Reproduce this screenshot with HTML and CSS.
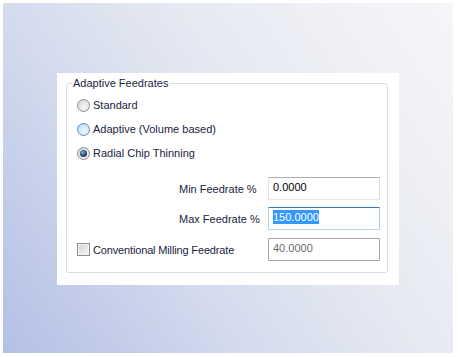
FILE: index.html
```html
<!doctype html>
<html lang="en">
    <head>
        <meta charset="UTF-8" />
        <meta name="viewport" content="width=device-width, initial-scale=1.0" />
        <title>Adaptive Feedrates</title>
        <link rel="stylesheet" href="styles.css">
    </head>
    <body>
        <div class="screen">
            <div class="panel">
                <fieldset class="group">
                    <legend>Adaptive Feedrates</legend>

                    <div class="option">
                        <span class="radio"></span>
                        <span>Standard</span>
                    </div>
                    <div class="option">
                        <span class="radio hover"></span>
                        <span>Adaptive (Volume based)</span>
                    </div>
                    <div class="option">
                        <span class="radio checked"></span>
                        <span>Radial Chip Thinning</span>
                    </div>

                    <div class="field-row first">
                        <span class="field-label">Min Feedrate %</span>
                        <div class="textbox">0.0000</div>
                    </div>
                    <div class="field-row">
                        <span class="field-label">Max Feedrate %</span>
                        <div class="textbox focused"><span class="selected">150.0000</span></div>
                    </div>
                    <div class="field-row last">
                        <span class="checkbox"></span>
                        <span class="check-label">Conventional Milling Feedrate</span>
                        <div class="textbox disabled">40.0000</div>
                    </div>
                </fieldset>
            </div>
        </div>
    </body>
</html>
```

FILE: styles.css
```css
body {
    margin: 0;
    background: #fff;
    font-family: "Liberation Sans", Arial, sans-serif;
    font-size: 11px;
    color: #1a2440;
}
.screen {
    margin: 3px;
    width: 450px;
    height: 350px;
    box-sizing: border-box;
    padding: 70px 0 0 54px;
    /* pale blue desktop wash, fading to white on the right */
    background: linear-gradient(55deg, #b3c1e6 0%, #c6cfea 20%, #d4dbed 35%, #e6e9f2 60%, #f1f2f6 85%, #f5f6f8 100%);
}
.panel {
    width: 342px;
    height: 212px;
    box-sizing: border-box;
    padding-top: 3px;
    background: #fff;
}
.group {
    margin: 0 11px 0 9px;
    padding: 3px 7px 11px 5px;
    border: 1px solid #d5dfe5;
    border-radius: 3px;
}
.group legend {
    padding: 0 1px;
    line-height: 14px;
}
.option {
    display: flex;
    align-items: center;
    gap: 3px;
    height: 24px;
    padding-left: 5px;
}
.radio {
    position: relative;
    width: 11px;
    height: 11px;
    border: 1px solid #8c8e91;
    border-radius: 50%;
    background: radial-gradient(circle at 60% 65%, #f8f8f8 0%, #e2e2e2 55%, #cfcfcf 100%);
}
.radio.hover {
    border-color: #5b8cb8;
    background: radial-gradient(circle at 60% 65%, #eef7fd 0%, #cfe7f8 55%, #b3d6f2 100%);
}
.radio.checked::after {
    content: "";
    position: absolute;
    left: 2px;
    top: 2px;
    width: 7px;
    height: 7px;
    border-radius: 50%;
    background: radial-gradient(circle at 40% 35%, #8fb4d8 0%, #2b5680 45%, #13263f 100%);
}
.field-row {
    display: flex;
    align-items: center;
    height: 23px;
    margin-top: 7px;
}
.field-row.first {
    margin-top: 12px;
    padding-left: 107px;
}
.field-row:not(.first):not(.last) {
    padding-left: 107px;
}
.field-row.last {
    margin-top: 8px;
    padding-left: 5px;
}
.textbox {
    margin-left: auto;
    width: 112px;
    height: 23px;
    box-sizing: border-box;
    padding: 2px 4px;
    line-height: 14px;
    color: #000;
    background: #fff;
    border: 1px solid;
    border-color: #abadb3 #dbdfe6 #e3e9ef #e2e3ea;
    border-radius: 1px;
}
.textbox.focused {
    border-color: #3d7bad #a4c9e3 #b7d9ed #b5cfe7;
}
.textbox.disabled {
    color: #6d6d6d;
    border-color: #a7a6aa;
}
.selected {
    display: inline-block;
    background: #3399ff;
    color: #fff;
}
.checkbox {
    width: 11px;
    height: 11px;
    border: 1px solid #8c8e91;
    box-shadow: inset 0 0 0 1px #f4f4f4;
    background: linear-gradient(135deg, #cfcfcf 0%, #e6e6e6 50%, #f6f6f6 100%);
}
.check-label {
    margin-left: 3px;
    letter-spacing: -0.15px;
}
```
